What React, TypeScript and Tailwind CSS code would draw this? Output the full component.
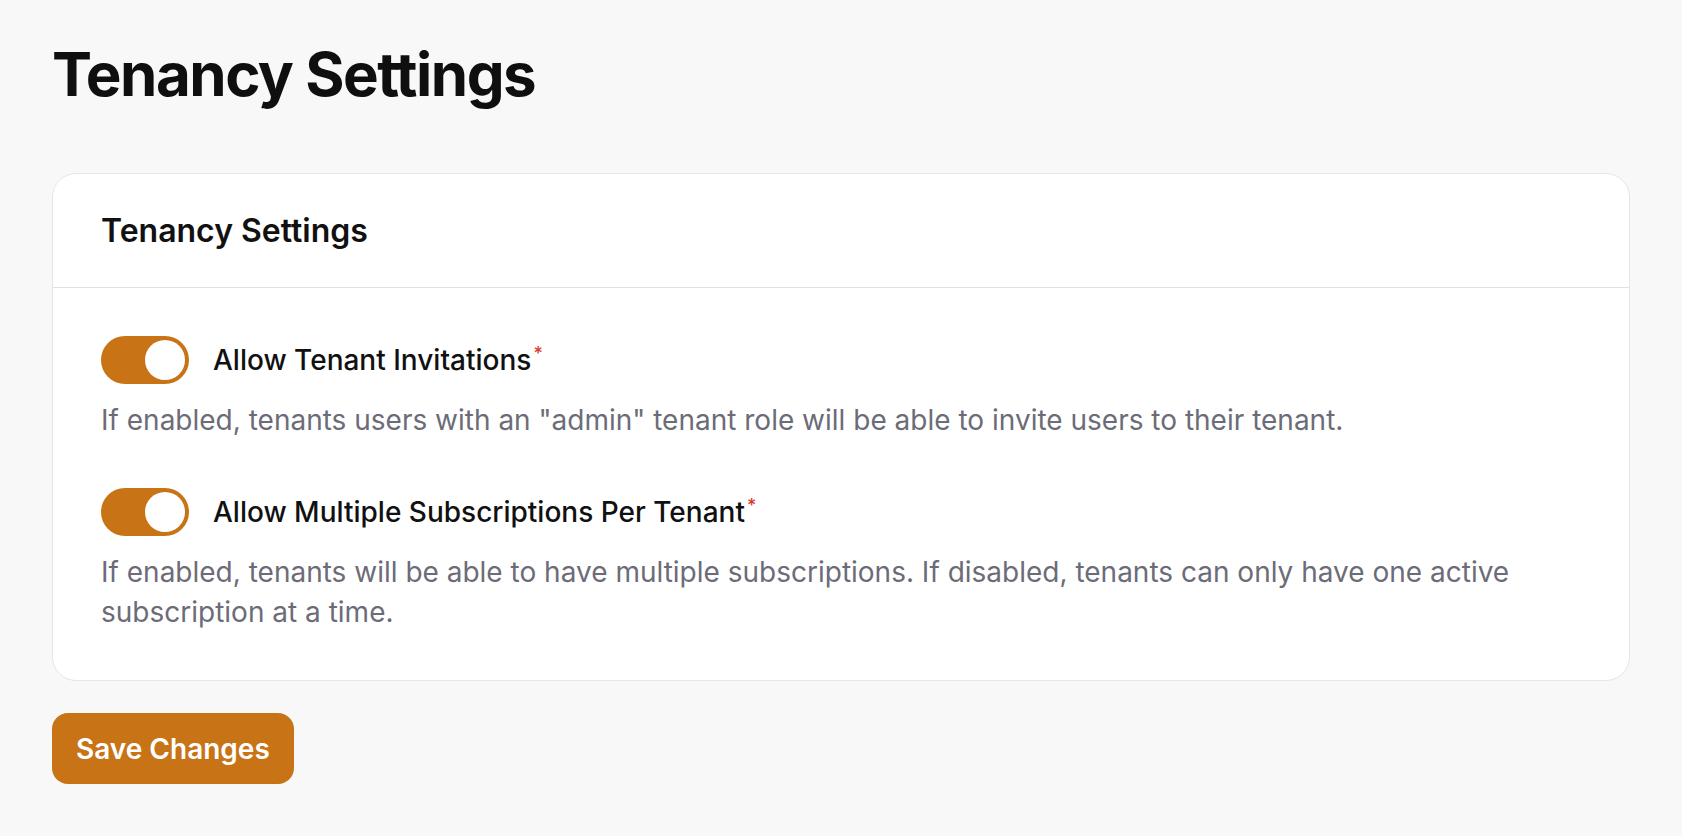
import React, { useState } from "react";

interface Setting {
  id: string;
  label: string;
  description: string;
  enabled: boolean;
}

const initialSettings: Setting[] = [
  {
    id: "invitations",
    label: "Allow Tenant Invitations",
    description:
      'If enabled, tenants users with an "admin" tenant role will be able to invite users to their tenant.',
    enabled: true,
  },
  {
    id: "subscriptions",
    label: "Allow Multiple Subscriptions Per Tenant",
    description:
      "If enabled, tenants will be able to have multiple subscriptions. If disabled, tenants can only have one active subscription at a time.",
    enabled: true,
  },
];

// Toggle switch
const Toggle: React.FC<{ on: boolean; onChange: () => void }> = ({ on, onChange }) => (
  <button
    type="button"
    onClick={onChange}
    className={`flex h-[48px] w-[88px] shrink-0 items-center rounded-full p-[4px] transition-all ${
      on ? "justify-end bg-[#c77316]" : "justify-start bg-gray-300"
    }`}
  >
    <span className="block h-[40px] w-[40px] rounded-full bg-white" />
  </button>
);

const App: React.FC = () => {
  const [settings, setSettings] = useState<Setting[]>(initialSettings);

  const toggle = (id: string) =>
    setSettings((prev) =>
      prev.map((s) => (s.id === id ? { ...s, enabled: !s.enabled } : s))
    );

  return (
    <div className="min-h-screen bg-[#f8f8f8] px-[52px] pt-[44px] pb-12 font-['Inter',sans-serif] text-[#111111]">
      <h1 className="mb-[69px] text-[60px] font-bold leading-none tracking-tight text-[#0f0f0f]">
        Tenancy Settings
      </h1>

      {/* Card */}
      <div className="rounded-3xl border border-[#e6e6e6] bg-white">
        <div className="flex h-[114px] items-center border-b border-[#e0e0e0] px-12">
          <h2 className="text-[32px] font-semibold leading-none">Tenancy Settings</h2>
        </div>

        <div className="flex flex-col gap-12 px-12 py-12">
          {settings.map((s) => (
            <div key={s.id}>
              <div className="flex items-center gap-6">
                <Toggle on={s.enabled} onChange={() => toggle(s.id)} />
                <span className="text-[28px] font-medium leading-none">
                  {s.label}
                  <span className="ml-[2px] align-super text-[18px] leading-none text-[#d93a2f]">*</span>
                </span>
              </div>
              <p className="mt-4 text-[28px] leading-[40px] text-[#6c6c78]">{s.description}</p>
            </div>
          ))}
        </div>
      </div>

      <button
        type="button"
        className="mt-8 h-[71px] rounded-2xl bg-[#c77316] px-6 text-[28px] font-semibold text-white"
      >
        Save Changes
      </button>
    </div>
  );
};

export default App;
